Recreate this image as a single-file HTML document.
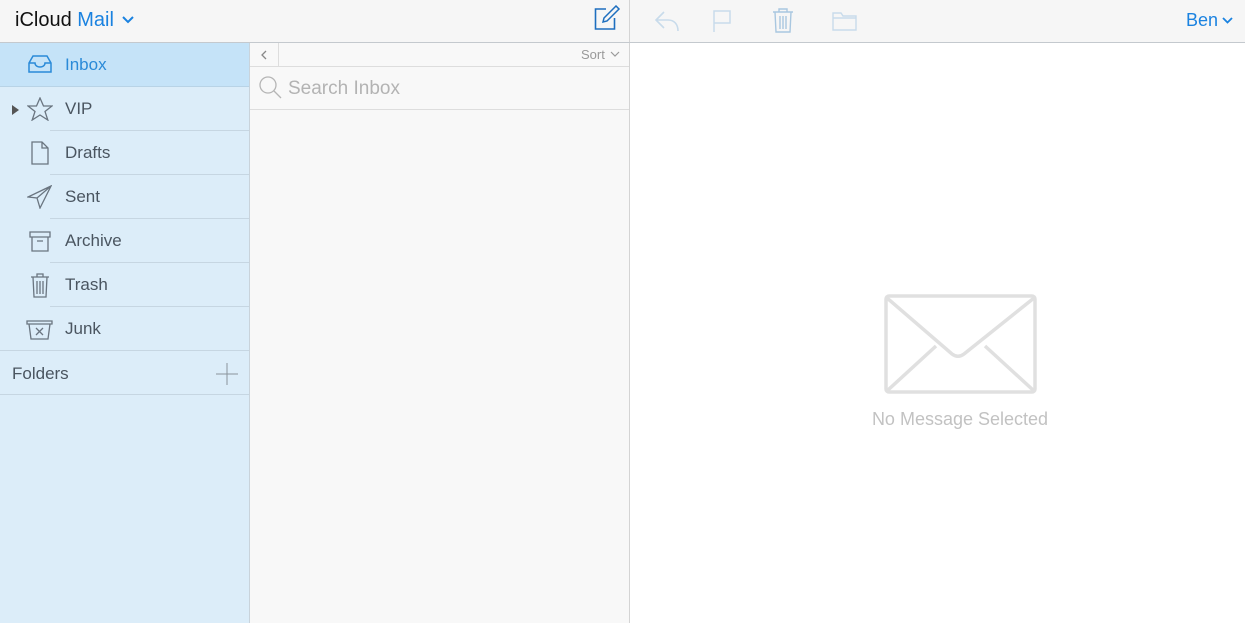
<!DOCTYPE html><html><head><style>
body{margin:0;width:1245px;height:623px;overflow:hidden;font-family:"Liberation Sans",sans-serif;background:#fff;position:relative}
.hdr{position:absolute;left:0;top:0;width:1245px;height:42px;background:#f6f6f6;border-bottom:1px solid #c4c9ce}
.side{position:absolute;left:0;top:43px;width:249px;height:580px;background:#dcedf9;border-right:1px solid #c9d3db}
.row{position:absolute;left:0;width:249px;height:44px}
.row .t{position:absolute;left:65px;top:12px;font-size:17px;color:#4a5560}
.row .ln{position:absolute;left:50px;right:0;bottom:0;height:1px;background:#c6d6e2}
.mid{position:absolute;left:250px;top:43px;width:379px;height:580px;background:#f8f8f8;border-right:1px solid #d4d4d4}
svg{position:absolute}
</style></head><body>
<div class="hdr">
<div style="position:absolute;left:15px;top:9px;font-size:20px;color:#111">iCloud <span style="color:#1a82e0">Mail</span></div>
<svg style="left:122px;top:16px" width="12" height="8"><path d="M1 1l5 5 5-5" stroke="#1a82e0" stroke-width="2" fill="none"/></svg>
<svg style="left:594px;top:5px" width="28" height="26"><path d="M12 4H1.5v20h19V13" stroke="#1e6fbf" stroke-width="1.6" fill="none"/><path d="M9 17l1-4L22 1l3 3-12 12z" stroke="#1e6fbf" stroke-width="1.5" fill="none"/></svg>
<div style="position:absolute;left:629px;top:0;width:1px;height:42px;background:#d4d4d4"></div>
<svg style="left:654px;top:10px" width="28" height="22"><path d="M10 2L2 10l8 8M2 10h12c6 0 10 4 10 11" stroke="#c8dbeb" stroke-width="1.6" fill="none"/></svg>
<svg style="left:712px;top:9px" width="22" height="24"><path d="M2 23V2h16v12H2" stroke="#c8dbeb" stroke-width="1.5" fill="none"/></svg>
<svg style="left:772px;top:8px" width="22" height="26"><path d="M1 4h20M7 4V1h8v3M3 4l1 20h14l1-20M8 8v13M11 8v13M14 8v13" stroke="#a9c7e0" stroke-width="1.4" fill="none"/></svg>
<svg style="left:832px;top:11px" width="25" height="20"><path d="M1 2h8l2 3h13v14H1zM1 7h23" stroke="#c8dbeb" stroke-width="1.4" fill="none"/></svg>
<div style="position:absolute;left:1186px;top:10px;font-size:18px;color:#1a82e0">Ben</div>
<svg style="left:1222px;top:17px" width="11" height="8"><path d="M1 1l4.5 4.5L10 1" stroke="#1a82e0" stroke-width="1.8" fill="none"/></svg>
</div>
<div class="side">
<div class="row" style="top:0;background:#c5e3f8"><svg style="left:28px;top:12px" width="24" height="18"><path d="M1 8l4-7h14l4 7v9H1zM1 8h6c0 3 3 4 5 4s5-1 5-4h6" stroke="#2a8ad8" stroke-width="1.5" fill="none"/></svg><div class="t" style="color:#2a8ad8">Inbox</div><div class="ln" style="left:0;background:#b8d3e6"></div></div>
<div class="row" style="top:44px"><svg style="left:12px;top:18px" width="8" height="10"><path d="M0 0l7 5-7 5z" fill="#555"/></svg><svg style="left:27px;top:10px" width="26" height="24"><path d="M13 1l3.5 8h8.5l-7 5.5 2.8 8.5-7.8-5-7.8 5 2.8-8.5-7-5.5h8.5z" stroke="#6a7580" stroke-width="1.3" fill="none"/></svg><div class="t">VIP</div><div class="ln"></div></div>
<div class="row" style="top:88px"><svg style="left:31px;top:10px" width="18" height="24"><path d="M1 1h10l6 6v16H1zM11 1v6h6" stroke="#6a7580" stroke-width="1.3" fill="none"/></svg><div class="t">Drafts</div><div class="ln"></div></div>
<div class="row" style="top:132px"><svg style="left:27px;top:10px" width="25" height="24"><path d="M24 1L1 12l9 1 3 10zM10 13L24 1" stroke="#6a7580" stroke-width="1.3" fill="none"/></svg><div class="t">Sent</div><div class="ln"></div></div>
<div class="row" style="top:176px"><svg style="left:29px;top:12px" width="22" height="21"><path d="M1 1h20v5H1zM3 6v14h16V6M8 10h6" stroke="#6a7580" stroke-width="1.3" fill="none"/></svg><div class="t">Archive</div><div class="ln"></div></div>
<div class="row" style="top:220px"><svg style="left:30px;top:10px" width="20" height="25"><path d="M1 4h18M7 4V1h6v3M3 4l1 20h12l1-20M7 8v13M10 8v13M13 8v13" stroke="#6a7580" stroke-width="1.3" fill="none"/></svg><div class="t">Trash</div><div class="ln"></div></div>
<div class="row" style="top:264px"><svg style="left:26px;top:13px" width="27" height="20"><path d="M1 1h25v3H1zM3 4l2 15h17l2-15M10 8l7 7M17 8l-7 7" stroke="#6a7580" stroke-width="1.3" fill="none"/></svg><div class="t">Junk</div><div class="ln" style="left:0"></div></div>
<div class="row" style="top:308px"><div class="t" style="left:12px;top:13px">Folders</div><svg style="left:215px;top:11px" width="24" height="24"><path d="M12 1v22M1 12h22" stroke="#8a939c" stroke-width="1"/></svg><div class="ln" style="left:0"></div></div>
</div>
<div class="mid">
<div style="position:absolute;left:0;top:0;width:28px;height:23px;border-right:1px solid #ddd;border-bottom:1px solid #ddd"></div>
<svg style="left:10px;top:7px" width="8" height="10"><path d="M6 1L2 5l4 4" stroke="#888" stroke-width="1.3" fill="none"/></svg>
<div style="position:absolute;left:28px;right:0;top:23px;height:1px;background:#ddd"></div>
<div style="position:absolute;left:331px;top:4px;font-size:13px;color:#999">Sort</div>
<svg style="left:360px;top:8px" width="10" height="7"><path d="M1 1l4 4 4-4" stroke="#999" stroke-width="1.2" fill="none"/></svg>
<svg style="left:9px;top:33px" width="24" height="24"><circle cx="9" cy="9" r="8" stroke="#b5b5b5" stroke-width="1.3" fill="none"/><path d="M15 15l7 7" stroke="#b5b5b5" stroke-width="1.3"/></svg>
<div style="position:absolute;left:38px;top:35px;font-size:19px;color:#b3b3b3">Search Inbox</div>
<div style="position:absolute;left:0;right:0;top:66px;height:1px;background:#ddd"></div>
</div>
<svg style="left:884px;top:294px" width="153" height="100"><rect x="2" y="2" width="149" height="96" rx="3" stroke="#e0e0e0" stroke-width="3.5" fill="none"/><path d="M3 4l65 56c4 3 8 3 12 0l70-56M4 96l48-44M149 96l-48-44" stroke="#e0e0e0" stroke-width="3.5" fill="none"/></svg>
<div style="position:absolute;left:860px;top:409px;width:200px;text-align:center;font-size:18px;color:#c2c2c2">No Message Selected</div>
</body></html>
